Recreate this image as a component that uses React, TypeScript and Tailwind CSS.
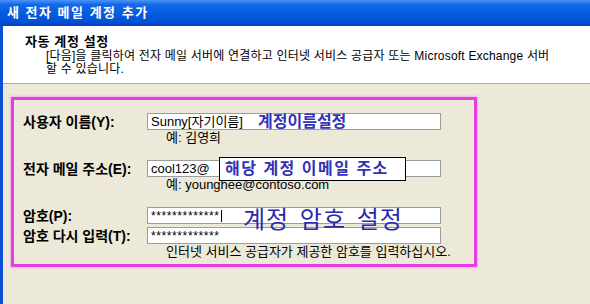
const FONT = 'font-["Liberation_Sans","Noto_Sans_CJK_KR",sans-serif]';

function Field({ children, caret }: { children?: React.ReactNode; caret?: boolean }) {
  return (
    <div className="w-[294px] h-[17px] bg-white border border-[#9c9c9c] flex items-center pl-[3px] text-[13px] leading-none text-black">
      {children}
      {caret && <span className="w-px h-[12px] bg-black ml-px" />}
    </div>
  );
}

function Row({ label, children }: { label: string; children: React.ReactNode }) {
  return (
    <div className="flex items-center">
      <div className="w-[124px] text-[14px] font-bold leading-none text-black whitespace-nowrap">{label}</div>
      {children}
    </div>
  );
}

function Hint({ text }: { text: string }) {
  return <div className="pl-[143px] h-[14px] text-[13px] leading-[14px] text-black whitespace-nowrap">{text}</div>;
}

export default function App() {
  return (
    <div className={`w-[590px] h-[304px] overflow-hidden flex flex-col bg-[#ece9d8] ${FONT}`}>
      {/* Title bar */}
      <div className="h-[26px] shrink-0 flex items-center pl-[7px] bg-[linear-gradient(180deg,#4a94f7_0%,#1268ea_18%,#0559dd_55%,#0453d8_80%,#0342c0_100%)]">
        <span className="text-white text-[13px] font-bold tracking-[1.5px]">새 전자 메일 계정 추가</span>
      </div>

      <div className="flex-1 flex flex-col border-l-[3px] border-[#0b4fd4]">
        {/* Header */}
        <div className="h-[58px] shrink-0 bg-white border-b border-[#aca899] pt-[8px] pl-[22px]">
          <div className="text-[13px] font-bold leading-[16px] tracking-[0.6px] text-black">자동 계정 설정</div>
          <div className="pl-[21px] text-[12px] leading-[13px] tracking-[0.2px] text-black whitespace-nowrap">
            <div>[다음]을 클릭하여 전자 메일 서버에 연결하고 인터넷 서비스 공급자 또는 Microsoft Exchange 서버</div>
            <div>할 수 있습니다.</div>
          </div>
        </div>

        {/* Body */}
        <div className="flex-1 pt-[13px] pl-[8px]">
          <div className="relative w-[466px] h-[170px] border-[3px] border-[#e23ee0] shadow-[0_0_2px_1px_#f4b0f0] pt-[13px] pl-[9px]">
            <Row label="사용자 이름(Y):">
              <Field>Sunny[자기이름]</Field>
            </Row>
            <div className="h-px" />
            <Hint text="예: 김영희" />
            <div className="h-[15px]" />
            <Row label="전자 메일 주소(E):">
              <Field>cool123@</Field>
            </Row>
            <div className="h-px" />
            <Hint text="예: younghee@contoso.com" />
            <div className="h-[15px]" />
            <Row label="암호(P):">
              <Field caret>
                <span className="text-[12px] tracking-[0.6px]">*************</span>
              </Field>
            </Row>
            <div className="h-[3px]" />
            <Row label="암호 다시 입력(T):">
              <Field>
                <span className="text-[12px] tracking-[0.6px]">*************</span>
              </Field>
            </Row>
            <div className="h-px" />
            <Hint text="인터넷 서비스 공급자가 제공한 암호를 입력하십시오." />

            {/* Annotations */}
            <div className="absolute left-[244px] top-[12px] text-[16px] font-bold leading-[19px] text-[#3232b4]">
              계정이름설정
            </div>
            <div className="absolute left-[205px] top-[57px] w-[187px] h-[24px] bg-white border border-black flex items-center pl-[5px] text-[16px] font-bold text-[#3232b4] tracking-[1.5px] whitespace-nowrap">
              해당 계정 이메일 주소
            </div>
            <div className="absolute left-[229px] top-[106px] text-[24px] leading-[28px] text-[#2a2aa8] tracking-[1px] [word-spacing:3px] whitespace-nowrap">
              계정 암호 설정
            </div>
          </div>
        </div>
      </div>
    </div>
  );
}
